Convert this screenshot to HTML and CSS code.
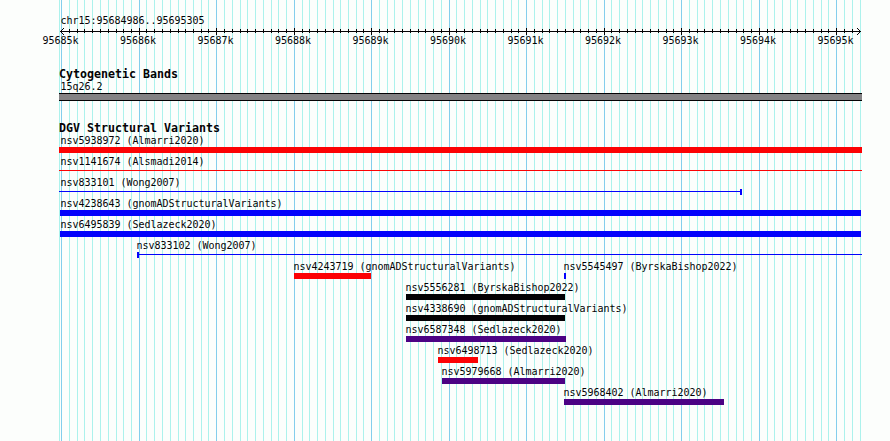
FILE: index.html
```html
<!DOCTYPE html>
<html lang="en">
<head>
    <meta charset="utf-8">
    <title>chr15:95684986..95695305</title>
    <link rel="stylesheet" href="styles.css">
</head>
<body>
    <div class="panel">
        <svg class="grid" width="890" height="441" shape-rendering="crispEdges">
            <path class="minor" id="minor"/>
            <path class="major" id="major"/>
        </svg>

        <div class="region">chr15:95684986..95695305</div>
        <svg class="ruler" width="890" height="9" shape-rendering="crispEdges">
            <path id="ticks"/>
            <path d="M60 4.5h801"/>
            <path d="M61 3.5h1M62 2.5h1M63 1.5h1M61 5.5h1M62 6.5h1M63 7.5h1"/>
            <path d="M859 3.5h1M858 2.5h1M857 1.5h1M859 5.5h1M858 6.5h1M857 7.5h1"/>
        </svg>
        <div class="scale" id="scale"></div>

        <h2 class="track-title cyto-title">Cytogenetic Bands</h2>
        <div class="band-label">15q26.2</div>
        <div class="band"></div>

        <h2 class="track-title dgv-title">DGV Structural Variants</h2>
        <div class="track" id="track"></div>
    </div>

    <script>
        // pixel position of every 100 bp line, every 1 kb line
        const minor = [
            59, 69, 77, 84, 92, 100, 108, 116, 123, 131,
            146, 154, 162, 170, 178, 185, 193, 201, 208,
            224, 232, 240, 247, 255, 263, 271, 278, 286,
            302, 309, 317, 325, 333, 340, 348, 356, 363,
            379, 387, 394, 402, 410, 418, 425, 433, 441,
            456, 464, 472, 480, 487, 495, 503, 511, 518,
            534, 542, 549, 557, 565, 573, 580, 588, 596,
            611, 619, 627, 635, 642, 650, 658, 666, 673,
            689, 697, 704, 712, 720, 728, 736, 743, 751,
            767, 774, 782, 790, 797, 805, 813, 821, 828,
            844, 852, 860
        ];
        const major = [61, 139, 216, 294, 371, 449, 526, 604, 681, 759, 836];

        const variants = [
            [{ name: 'nsv5938972 (Almarri2020)', color: 'red', start: 59, end: 862, label: 60.5 }],
            [{ name: 'nsv1141674 (Alsmadi2014)', color: 'red', type: 'line', start: 59, end: 862, label: 60.5 }],
            [{ name: 'nsv833101 (Wong2007)', color: 'blue', type: 'line cap-right', start: 59, end: 742, label: 60.5 }],
            [{ name: 'nsv4238643 (gnomADStructuralVariants)', color: 'blue', start: 60, end: 861, label: 60.5 }],
            [{ name: 'nsv6495839 (Sedlazeck2020)', color: 'blue', start: 60, end: 861, label: 60.5 }],
            [{ name: 'nsv833102 (Wong2007)', color: 'blue', type: 'line cap-left', start: 137, end: 862, label: 136.5 }],
            [
                { name: 'nsv4243719 (gnomADStructuralVariants)', color: 'red', start: 294, end: 371, label: 293.5 },
                { name: 'nsv5545497 (ByrskaBishop2022)', color: 'blue', start: 564, end: 566, label: 563.5 }
            ],
            [{ name: 'nsv5556281 (ByrskaBishop2022)', color: 'black', start: 406, end: 565, label: 405.5 }],
            [{ name: 'nsv4338690 (gnomADStructuralVariants)', color: 'black', start: 406, end: 565, label: 405.5 }],
            [{ name: 'nsv6587348 (Sedlazeck2020)', color: 'indigo', start: 406, end: 566, label: 405.5 }],
            [{ name: 'nsv6498713 (Sedlazeck2020)', color: 'red', start: 438, end: 478, label: 437.5 }],
            [{ name: 'nsv5979668 (Almarri2020)', color: 'indigo', start: 442, end: 565, label: 441.5 }],
            [{ name: 'nsv5968402 (Almarri2020)', color: 'indigo', start: 564, end: 724, label: 563.5 }]
        ];

        const vlines = (xs, y, h) => xs.map(x => `M${x + 0.5} ${y}v${h}`).join('');
        document.getElementById('minor').setAttribute('d', vlines(minor, 0, 441));
        document.getElementById('major').setAttribute('d', vlines(major, 0, 441));
        document.getElementById('ticks').setAttribute('d',
            vlines(minor.slice(1, -1), 2, 4) + vlines(major.slice(1), 1, 7));

        document.getElementById('scale').innerHTML = major
            .map((x, i) => `<span>${95685 + i}k</span>`)
            .join('');

        document.getElementById('track').innerHTML = variants.map(row =>
            '<div class="row">' + row.map(v => `
                <div class="variant">
                    <div class="name" style="margin-left: ${v.label}px">${v.name}</div>
                    <div class="glyph ${v.color} ${v.type || 'box'}" style="margin-left: ${v.start}px; width: ${v.end - v.start}px"></div>
                </div>`).join('') + '</div>'
        ).join('');
    </script>
</body>
</html>
```
FILE: styles.css
```css
body {
    margin: 0;
    background: #fcfefc;
    color: #040204;
    font-family: "DejaVu Sans Mono", monospace;
    font-size: 10px;
    line-height: 12px;
}
.panel {
    position: relative;
    width: 890px;
    height: 441px;
    overflow: hidden;
    white-space: nowrap;
    letter-spacing: -0.02px;
}
/* vertical guide lines behind all the tracks */
.grid {
    position: absolute;
    left: 0;
    top: 0;
    z-index: -1;
}
.grid path,
.ruler path {
    fill: none;
    stroke-width: 1;
}
.grid .minor {
    stroke: #acf2ec;
}
.grid .major {
    stroke: #84ceec;
}
.region {
    padding: 15px 0 0 60.5px;
}
.ruler {
    display: block;
}
.ruler path {
    stroke: #040204;
}
.scale {
    display: flex;
    gap: 41.5px;
    margin-top: -1px;
    padding-left: 42.5px;
}
.scale span {
    width: 36px;
    flex: none;
}
.track-title {
    margin: 0;
    padding-left: 59px;
    font-size: 11.63px;
    font-weight: bold;
    line-height: 13px;
    letter-spacing: 0;
}
.cyto-title {
    margin-top: 21px;
}
.band-label {
    padding-left: 60.5px;
}
.band {
    box-sizing: border-box;
    width: 803px;
    height: 8px;
    margin-left: 59px;
    border: solid #040204;
    border-width: 1px 0;
    background: #848284;
}
.dgv-title {
    margin-top: 21px;
}
/* variants of one row share the same grid cell */
.row {
    display: grid;
    height: 21px;
}
.variant {
    grid-area: 1 / 1;
}
.glyph {
    height: 6px;
    box-sizing: border-box;
}
.red { color: #fc0204; }
.blue { color: #0402fc; }
.black { color: #040204; }
.indigo { color: #4c0284; }
.box {
    background: currentColor;
}
.line {
    background: linear-gradient(currentColor, currentColor) 0 2px / 100% 1px no-repeat;
}
.cap-left {
    border-left: 2px solid;
}
.cap-right {
    border-right: 2px solid;
}
```
